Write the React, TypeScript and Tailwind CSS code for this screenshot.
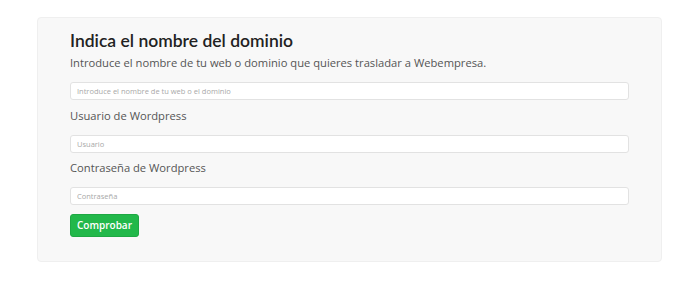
import React from "react";

export default function App() {
  const sans = { fontFamily: '"Open Sans", "Noto Sans", sans-serif' };
  const inputCls =
    "block w-full h-[18px] rounded-[3px] border border-[#e2e2e2] bg-white px-[6px] text-[7.5px] text-[#999] placeholder:text-[#a8a8a8] outline-none";
  return (
    <div className="w-[700px] h-[287px] bg-white overflow-hidden relative" style={sans}>
      <div className="absolute left-[461px] top-[-10px] text-[9px] text-[#d4d4d4]">Lorem dolorem consectetur</div>
      <div className="pt-[17px] pl-[37px]">
        <div className="w-[625px] h-[245px] rounded-[4px] border border-[#efefef] bg-[#f8f8f8] pl-[32px] pr-[32px] pt-[12px]">
          <h1
            className="text-[17.5px] leading-[22px] font-semibold text-[#222]"
            style={{ fontFamily: 'Lato, "Open Sans", sans-serif' }}
          >
            Indica el nombre del dominio
          </h1>
          <p className="mt-[2px] text-[11.2px] leading-[18px] text-[#555]">
            Introduce el nombre de tu web o dominio que quieres trasladar a Webempresa.
          </p>
          <input className={inputCls + " mt-[10px]"} placeholder="Introduce el nombre de tu web o el dominio" />
          <div className="mt-[7px] text-[11.2px] leading-[18px] text-[#555]">Usuario de Wordpress</div>
          <input className={inputCls + " mt-[10px]"} placeholder="Usuario" />
          <div className="mt-[6px] text-[11.2px] leading-[18px] text-[#555]">Contraseña de Wordpress</div>
          <input className={inputCls + " mt-[10px]"} placeholder="Contraseña" />
          <button className="block mt-[9px] w-[69px] h-[23px] rounded-[3px] bg-[#22b84a] border border-[#1ea843] text-white text-[10px] font-semibold">
            Comprobar
          </button>
        </div>
      </div>
    </div>
  );
}
